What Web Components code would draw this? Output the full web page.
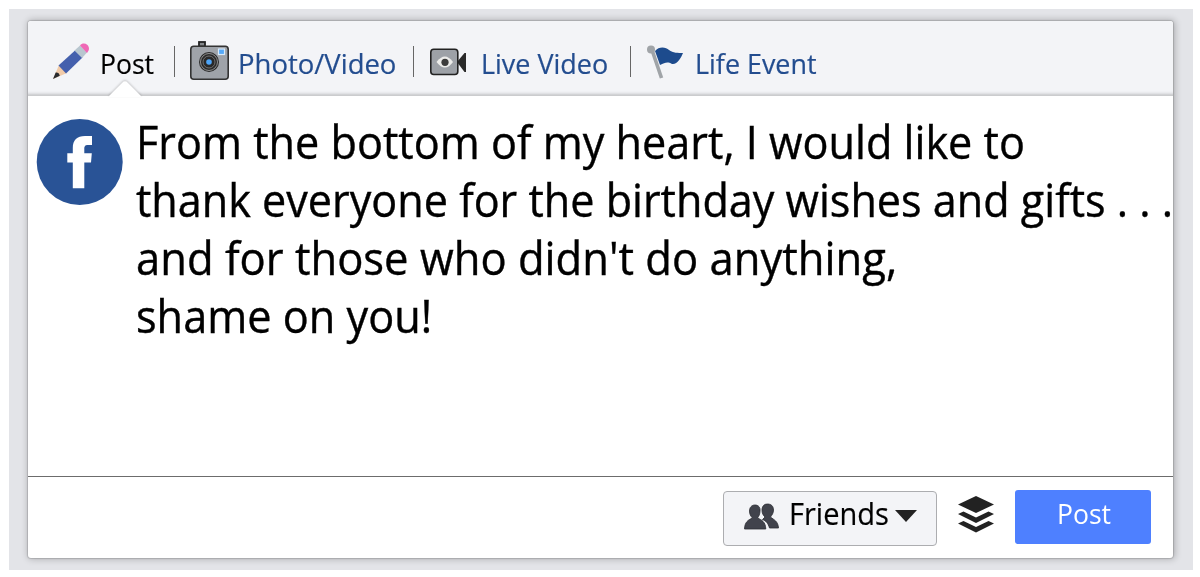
<!DOCTYPE html>
<html lang="en">
<head>
<meta charset="utf-8">
<title>Post composer</title>
<style>
  body {
    margin: 0;
    background: #fff;
    font-family: "Open Sans", "Noto Sans", sans-serif;
    color: #000;
  }
</style>
</head>
<body>
<post-composer>
  <composer-tab slot="tabs" icon="pencil" active style="--icon: 37px; --gap: 10px; --after: 20px"><fit-text width="54">Post</fit-text></composer-tab>
  <composer-tab slot="tabs" icon="camera" style="--icon: 39px; --gap: 9px; --before: 15px; --after: 17px; --lift: 5px"><fit-text width="158">Photo/Video</fit-text></composer-tab>
  <composer-tab slot="tabs" icon="video" style="--icon: 37px; --gap: 14px; --before: 16px; --after: 22px; --lift: 3px"><fit-text width="127">Live Video</fit-text></composer-tab>
  <composer-tab slot="tabs" icon="flag" last style="--icon: 37px; --gap: 11px; --before: 16px; --lift: 1px"><fit-text width="122">Life Event</fit-text></composer-tab>

  <user-avatar slot="avatar"></user-avatar>
  <fit-text slot="message" width="889">From the bottom of my heart, I would like to</fit-text>
  <fit-text slot="message" width="1037">thank everyone for the birthday wishes and gifts . . .</fit-text>
  <fit-text slot="message" width="761">and for those who didn't do anything,</fit-text>
  <fit-text slot="message" width="296">shame on you!</fit-text>

  <audience-button slot="actions"><fit-text width="100">Friends</fit-text></audience-button>
  <composer-icon slot="actions" name="layers"></composer-icon>
  <submit-button slot="actions"><fit-text width="54">Post</fit-text></submit-button>
</post-composer>

<script>
const ICONS = {
  pencil: `<svg width="37" height="37" viewBox="0 0 37 37">
    <path d="M0 36 6 22 14 30Z" fill="#f1cba9"/>
    <path d="M0 36 2.700 29.500Q6 29 6.800 32.800Z" fill="#292b2f"/>
    <path d="M5.500 22.500 22 7.500 29.500 14.500 13 30.500Z" fill="#4460ad"/>
    <path d="M21.500 7.500 27 2.500 34 9.500 29 15Z" fill="#b8c6cf"/>
    <path d="M27 2.500C29 0 32 0 34.500 2 37 5 36 7.500 34 10Z" fill="#ef68b6"/>
  </svg>`,
  camera: `<svg width="39" height="39" viewBox="0 0 39 39">
    <rect x="9" y="1" width="6" height="4.500" fill="#84888c" stroke="#222" stroke-width="1.800"/>
    <rect x=".8" y="5.300" width="37.400" height="32.900" rx="3" fill="#9fa3a9" stroke="#333" stroke-width="1.600"/>
    <circle cx="19" cy="21" r="10" fill="#292929"/>
    <circle cx="19" cy="21" r="8.500" fill="none" stroke="#aaa" stroke-width=".8"/>
    <circle cx="19" cy="21" r="6" fill="none" stroke="#777" stroke-width=".9"/>
    <circle cx="19" cy="21" r="2.800" fill="#4da4f7"/>
    <rect x="28.500" y="8" width="6" height="5.500" fill="#55a9f8" stroke="#d8eafa" stroke-width="1.200"/>
  </svg>`,
  video: `<svg width="37" height="28" viewBox="0 0 37 28">
    <path d="M27 14 34.500 5H36V24H34.500Z" fill="#292929"/>
    <rect x=".8" y="1.300" width="27" height="25.200" rx="3" fill="#9da1a7" stroke="#222" stroke-width="1.600"/>
    <path d="M6.500 14Q15 3 23 14 15 25 6.500 14Z" fill="#ececea"/>
    <circle cx="15" cy="14.300" r="3.600" fill="#3c3c3c"/>
  </svg>`,
  flag: `<svg width="37" height="35" viewBox="0 0 37 35">
    <path d="M5 5 14.500 33" stroke="#a0a4a8" stroke-width="3.600"/>
    <circle cx="4" cy="4.500" r="4" fill="#a0a4a8"/>
    <path d="M8 6C12 1 19 2 22 5 26 8 31 8 36 8 34 13 30 20 25 19 20 16 18 18 13 20Z" fill="#1d4b8d"/>
  </svg>`,
  friends: `<svg width="36" height="27" viewBox="0 0 36 27" fill="#41434c" stroke="#2c2d34" stroke-width=".8">
    <path d="M23.500 1C27 1 29.500 3 29.500 7 29.500 10 28 12 26.500 14 30 17 34 18 34.500 25H25.500C24 20 22 18 18.500 16.500L21 14C18 11 18 9 18 6 18.500 3 20 1 23.500 1Z"/>
    <path d="M11 2C14.500 2 16.500 4.500 16 8 16 11 15 13 13.500 15 18 17 21.500 19 21.800 26H.5C.8 19 4 17 8.500 15 6.500 13 5.500 11 5.500 8 5.500 4.500 7.500 2 11 2Z"/>
  </svg>`,
  layers: `<svg width="36" height="37" viewBox="0 0 36 37" fill="#222">
    <path d="M18 0 36 8.500 18 17 0 8.500Z"/>
    <path d="M0 18 5.500 15.500 18 21.500 30.500 15.500 36 18 18 27Z"/>
    <path d="M0 27.500 5.500 25 18 31 30.500 25 36 27.500 18 36.500Z"/>
  </svg>`
};

class ComposerIcon extends HTMLElement {
  connectedCallback() {
    if (!this.shadowRoot) this.attachShadow({ mode: 'open' });
    this.shadowRoot.innerHTML = `
      <style>
        :host { display: block; flex: none; }
        svg { display: block; }
      </style>
      ${ICONS[this.getAttribute('name')]}
    `;
  }
}

// One line of text, squeezed horizontally to the given width
class FitText extends HTMLElement {
  connectedCallback() {
    const width = Number(this.getAttribute('width'));
    if (!this.shadowRoot) this.attachShadow({ mode: 'open' });
    this.shadowRoot.innerHTML = `
      <style>
        :host { display: block; flex: none; width: ${width}px; white-space: nowrap; }
        span { display: inline-block; transform-origin: 0 0; }
      </style>
      <span><slot></slot></span>
    `;
    requestAnimationFrame(() => this.fit(width));
    this.fit(width);
  }

  fit(width) {
    const span = this.shadowRoot.querySelector('span');
    if (span.offsetWidth) {
      span.style.transform = `scaleX(${width / span.offsetWidth})`;
    }
  }
}

class ComposerTab extends HTMLElement {
  connectedCallback() {
    if (!this.shadowRoot) this.attachShadow({ mode: 'open' });
    this.shadowRoot.innerHTML = `
      <style>
        :host {
          display: flex;
          position: relative;
          align-items: center;
          flex: none;
          height: 40px;
          padding-left: var(--before, 0);
          font-size: 28px;
          line-height: 40px;
          color: #234d8f;
          -webkit-text-stroke: .2px;
        }
        :host([active]) { color: #000; }
        composer-icon { width: var(--icon); margin: 0 var(--gap) var(--lift, 3px) 0; }
        .line { width: 1px; height: 31px; margin: 0 0 4px var(--after); background: #666; }
        :host([last]) .line { display: none; }
        .notch {
          display: none;
          position: absolute;
          left: 56px;
          top: 38px;
          filter: drop-shadow(0 -1px 1px rgba(0, 0, 0, .2));
        }
        :host([active]) .notch { display: block; }
      </style>
      <composer-icon name="${this.getAttribute('icon')}"></composer-icon>
      <slot></slot>
      <span class="line"></span>
      <svg class="notch" width="32" height="16"><path d="M0 15 14.500 .5Q16 0 17.500 .5L32 15V16H0Z" fill="#fff"/></svg>
    `;
  }
}

class UserAvatar extends HTMLElement {
  connectedCallback() {
    if (!this.shadowRoot) this.attachShadow({ mode: 'open' });
    this.shadowRoot.innerHTML = `
      <style>
        :host { display: block; flex: none; width: 86px; height: 86px; }
        svg { display: block; overflow: visible; }
      </style>
      <svg width="86" height="86" viewBox="0 0 86 86">
        <circle cx="42.700" cy="43" r="43" fill="#295396"/>
        <path d="M35.800 69.300V43.500H30.300V34.300H35.800V29C35.800 21 40 17 48 17H55V26H51C48 26 47.300 27.500 47.300 30V34.300H54.800L54 43.500H47.300V69.300Z" fill="#fff"/>
      </svg>
    `;
  }
}

class AudienceButton extends HTMLElement {
  connectedCallback() {
    if (!this.shadowRoot) this.attachShadow({ mode: 'open' });
    this.shadowRoot.innerHTML = `
      <style>
        :host {
          display: flex;
          flex: none;
          box-sizing: border-box;
          width: 214px;
          height: 55px;
          padding: 0 0 0 20px;
          border: 1px solid #acadb0;
          border-radius: 4px;
          background: #f3f4f7;
          font-size: 30.500px;
          line-height: 43px;
          -webkit-text-stroke: .2px;
        }
        composer-icon { margin: 11px 9px 0 0; }
        .caret { display: block; margin: 18px 0 0 6px; }
      </style>
      <composer-icon name="friends"></composer-icon>
      <slot></slot>
      <svg class="caret" width="22" height="12"><path d="M0 0H22L11 12Z" fill="#222"/></svg>
    `;
  }
}

class SubmitButton extends HTMLElement {
  connectedCallback() {
    if (!this.shadowRoot) this.attachShadow({ mode: 'open' });
    this.shadowRoot.innerHTML = `
      <style>
        :host {
          display: flex;
          flex: none;
          box-sizing: border-box;
          justify-content: center;
          width: 136px;
          height: 54px;
          padding-left: 2px;
          border-radius: 3px;
          background: #4e80ff;
          color: #fff;
          font-size: 28px;
          line-height: 47px;
        }
      </style>
      <slot></slot>
    `;
  }
}

class PostComposer extends HTMLElement {
  connectedCallback() {
    if (!this.shadowRoot) this.attachShadow({ mode: 'open' });
    this.shadowRoot.innerHTML = `
      <style>
        :host {
          display: block;
          box-sizing: border-box;
          width: 1184px;
          height: 561px;
          margin: 9px 0 0 9px;
          padding: 12px 20px 12px 19px;
          background: #e3e4e8;
        }
        .card {
          display: flex;
          flex-direction: column;
          height: 537px;
          border-radius: 3px;
          background: #fff;
          box-shadow: 0 0 1px 1px rgba(0, 0, 0, .14), 1px 0 7px 1px rgba(0, 0, 0, .24);
        }
        header {
          display: flex;
          box-sizing: border-box;
          flex: none;
          height: 75px;
          padding: 22px 0 0 25px;
          border-radius: 3px 3px 0 0;
          background: linear-gradient(#f3f4f7 70px, #e7e8eb 72px, #cbccce 74px);
        }
        main {
          display: flex;
          flex: none;
          box-sizing: border-box;
          height: 381px;
          padding-left: 9px;
          border-bottom: 1px solid #6c6c6c;
        }
        .avatar { padding-top: 23px; }
        .message {
          padding: 17px 0 0 13px;
          font-size: 45px;
          line-height: 58px;
          -webkit-text-stroke: .4px;
        }
        footer {
          display: flex;
          justify-content: flex-end;
          padding: 13px 22px 0 0;
        }
        ::slotted(audience-button) { margin: 1px 21px 0 0; }
        ::slotted(composer-icon) { margin: 6px 21px 0 0; }
      </style>
      <section class="card">
        <header><slot name="tabs"></slot></header>
        <main>
          <div class="avatar"><slot name="avatar"></slot></div>
          <div class="message"><slot name="message"></slot></div>
        </main>
        <footer><slot name="actions"></slot></footer>
      </section>
    `;
  }
}

customElements.define('composer-icon', ComposerIcon);
customElements.define('composer-tab', ComposerTab);
customElements.define('user-avatar', UserAvatar);
customElements.define('audience-button', AudienceButton);
customElements.define('submit-button', SubmitButton);
customElements.define('post-composer', PostComposer);
customElements.define('fit-text', FitText);
</script>
</body>
</html>
